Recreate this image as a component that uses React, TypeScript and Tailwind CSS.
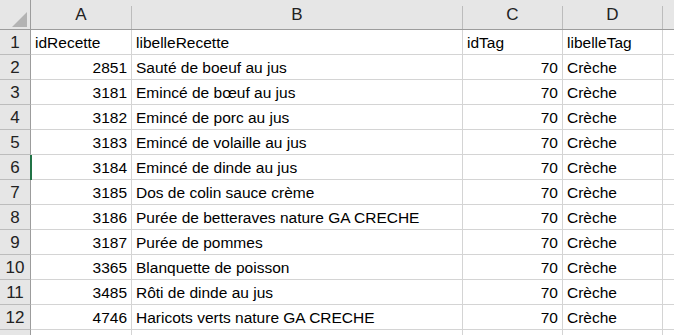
import React from 'react';

const rows: [number, string, number, string][] = [
  [2851, 'Sauté de boeuf au jus', 70, 'Crèche'],
  [3181, 'Emincé de bœuf au jus', 70, 'Crèche'],
  [3182, 'Emincé de porc au jus', 70, 'Crèche'],
  [3183, 'Emincé de volaille au jus', 70, 'Crèche'],
  [3184, 'Emincé de dinde au jus', 70, 'Crèche'],
  [3185, 'Dos de colin sauce crème', 70, 'Crèche'],
  [3186, 'Purée de betteraves nature GA CRECHE', 70, 'Crèche'],
  [3187, 'Purée de pommes', 70, 'Crèche'],
  [3365, 'Blanquette de poisson', 70, 'Crèche'],
  [3485, 'Rôti de dinde au jus', 70, 'Crèche'],
  [4746, 'Haricots verts nature GA CRECHE', 70, 'Crèche'],
];

const font = { fontFamily: '"Liberation Sans", Arial, sans-serif' };

function ColHead({ label, w }: { label: string; w: string }) {
  return (
    <div className={`${w} shrink-0 h-[23px] self-end flex items-end justify-center pb-[2px] text-[17px] text-[#222] border-r border-[#bcbcbc]`}>
      {label}
    </div>
  );
}

function RowNum({ n, active }: { n: number; active?: boolean }) {
  return (
    <div className="w-[31px] shrink-0 h-full bg-[#e6e6e6] border-r border-[#9c9c9c] border-b border-b-[#bcbcbc] flex items-center justify-center pt-[1px] text-[17px] text-[#222] relative">
      {n}
      {active && <div className="absolute right-[-2px] top-0 bottom-[-1px] w-[2px] bg-[#217346]" />}
    </div>
  );
}

export default function App() {
  return (
    <div className="w-[674px] h-[335px] overflow-hidden bg-white text-[15.5px] text-black" style={font}>
      {/* column headers */}
      <div className="flex h-[30px] bg-[#e6e6e6] border-b border-[#9c9c9c]">
        <div className="w-[31px] shrink-0 h-full border-r border-[#9c9c9c] relative">
          <svg className="absolute left-[12px] top-[12px]" width="15" height="15" viewBox="0 0 15 15">
            <polygon points="15,0 15,15 0,15" fill="#b3b3b3" />
          </svg>
        </div>
        <ColHead label="A" w="w-[101px]" />
        <ColHead label="B" w="w-[331px]" />
        <ColHead label="C" w="w-[100px]" />
        <ColHead label="D" w="w-[100px]" />
        <div className="flex-1" />
      </div>

      {/* header row */}
      <div className="flex h-[25px]">
        <RowNum n={1} />
        <div className="w-[101px] shrink-0 border-r border-b border-[#d4d4d4] flex items-center pt-[1px] px-[4px]">idRecette</div>
        <div className="w-[331px] shrink-0 border-r border-b border-[#d4d4d4] flex items-center pt-[1px] px-[4px]">libelleRecette</div>
        <div className="w-[100px] shrink-0 border-r border-b border-[#d4d4d4] flex items-center pt-[1px] px-[4px]">idTag</div>
        <div className="w-[100px] shrink-0 border-r border-b border-[#d4d4d4] flex items-center pt-[1px] px-[4px]">libelleTag</div>
        <div className="flex-1 border-b border-[#d4d4d4]" />
      </div>

      {rows.map((r, i) => (
        <div key={r[0]} className="flex h-[25px]">
          <RowNum n={i + 2} active={i + 2 === 6} />
          <div className="w-[101px] shrink-0 border-r border-b border-[#d4d4d4] flex items-center justify-end pt-[1px] px-[4px]">{r[0]}</div>
          <div className="w-[331px] shrink-0 border-r border-b border-[#d4d4d4] flex items-center pt-[1px] px-[4px] whitespace-nowrap">{r[1]}</div>
          <div className="w-[100px] shrink-0 border-r border-b border-[#d4d4d4] flex items-center justify-end pt-[1px] px-[4px]">{r[2]}</div>
          <div className="w-[100px] shrink-0 border-r border-b border-[#d4d4d4] flex items-center pt-[1px] px-[4px]">{r[3]}</div>
          <div className="flex-1 border-b border-[#d4d4d4]" />
        </div>
      ))}

      <div className="flex h-[25px]">
        <div className="w-[31px] shrink-0 h-full bg-[#e6e6e6] border-r border-[#9c9c9c]" />
        <div className="w-[101px] shrink-0 border-r border-[#d4d4d4]" />
        <div className="w-[331px] shrink-0 border-r border-[#d4d4d4]" />
        <div className="w-[100px] shrink-0 border-r border-[#d4d4d4]" />
        <div className="w-[100px] shrink-0 border-r border-[#d4d4d4]" />
      </div>
    </div>
  );
}
